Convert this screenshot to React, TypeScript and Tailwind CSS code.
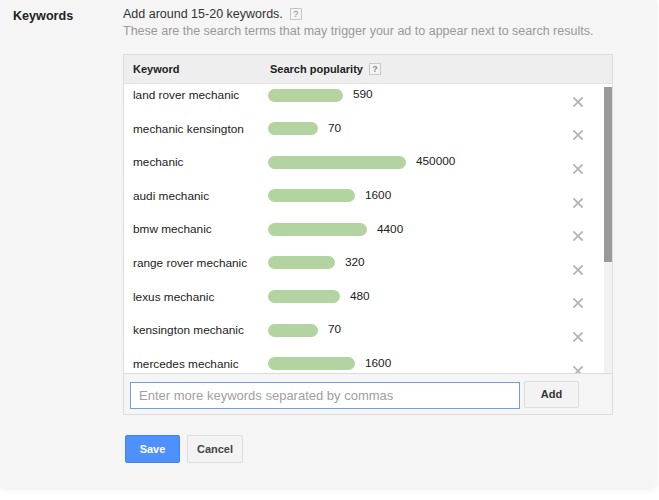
import React from "react";

const rows: [string, number, string][] = [
  ["land rover mechanic", 75, "590"],
  ["mechanic kensington", 50, "70"],
  ["mechanic", 138, "450000"],
  ["audi mechanic", 87, "1600"],
  ["bmw mechanic", 99, "4400"],
  ["range rover mechanic", 67, "320"],
  ["lexus mechanic", 72, "480"],
  ["kensington mechanic", 50, "70"],
  ["mercedes mechanic", 87, "1600"],
];

function Help() {
  return (
    <span className="inline-flex items-center justify-center w-[12px] h-[12px] border border-[#c8c8c8] bg-[#f4f4f4] text-[9px] text-[#888] leading-none">
      ?
    </span>
  );
}

function XIcon() {
  return (
    <svg width="10" height="10" viewBox="0 0 10 10">
      <path d="M1 1 L9 9 M9 1 L1 9" stroke="#b5b5b5" strokeWidth="1.8" strokeLinecap="square" />
    </svg>
  );
}

export default function App() {
  return (
    <div className="w-[659px] h-[500px] bg-white font-['Liberation_Sans',Arial,sans-serif] text-[#333]">
      <div className="w-[657px] h-[488px] bg-[#f5f5f5] rounded-br-[6px] shadow-[0_2px_6px_rgba(0,0,0,0.06)] flex">
        <div className="w-[123px] pl-[13px] pt-[7px] text-[12.6px] font-bold text-[#222]">Keywords</div>
        <div className="flex flex-col">
          <div className="pt-[7px] text-[12.5px] text-[#333] flex items-center gap-[7px] h-[21px]">
            <span>Add around 15-20 keywords.</span>
            <Help />
          </div>
          <div className="text-[12.5px] text-[#999] mt-[2px] leading-[16px]">
            These are the search terms that may trigger your ad to appear next to search results.
          </div>
          <div className="mt-[15px] w-[490px] border border-[#dcdcdc] flex flex-col">
            <div className="h-[29px] bg-[#eeeeee] border-b border-[#e2e2e2] flex items-center text-[11px] font-bold text-[#222]">
              <div className="pl-[9px] w-[146px]">Keyword</div>
              <div className="flex items-center gap-[6px]">
                <span>Search popularity</span>
                <Help />
              </div>
            </div>
            <div className="h-[289px] bg-white flex overflow-hidden">
              <div className="flex-1 flex flex-col">
                {rows.map(([k, w, n], i) => (
                  <div key={i} className="h-[33.6px] shrink-0 flex">
                    <div className="flex-1 flex items-start pt-[4px]">
                      <div className="w-[144px] pl-[9px] text-[11.8px] leading-[14px] text-[#222]">{k}</div>
                      <div className="flex items-center h-[14px]">
                        <div className="h-[13px] rounded-full bg-[#b3d4a0]" style={{ width: w }} />
                        <span className="ml-[10px] text-[11.8px] text-[#222]">{n}</span>
                      </div>
                    </div>
                    <div className="w-[52px] flex items-center justify-center pt-[2px]">
                      <XIcon />
                    </div>
                  </div>
                ))}
              </div>
              <div className="w-[8px] flex flex-col bg-[#f2f2f2]">
                <div className="h-[3px] bg-white" />
                <div className="h-[175px] bg-[#999999]" />
              </div>
            </div>
            <div className="h-[41px] bg-[#f5f5f5] border-t border-[#dcdcdc] flex items-center pl-[6px] gap-[4px]">
              <div className="w-[390px] h-[27px] bg-white border border-[#6d9ef2] flex items-center pl-[8px] text-[13px] text-[#a0a0a0] mt-[3px]">
                Enter more keywords separated by commas
              </div>
              <div className="w-[55px] h-[27px] border border-[#dcdcdc] bg-[#f3f3f3] rounded-[2px] flex items-center justify-center text-[11px] font-bold text-[#333]">
                Add
              </div>
            </div>
          </div>
          <div className="mt-[20px] flex gap-[7px] ml-[2px]">
            <div className="w-[55px] h-[28px] bg-[#4d90fe] border border-[#3f83f0] rounded-[2px] flex items-center justify-center text-[11px] font-bold text-white">
              Save
            </div>
            <div className="w-[56px] h-[28px] bg-[#f3f3f3] border border-[#dcdcdc] rounded-[2px] flex items-center justify-center text-[11px] font-bold text-[#444]">
              Cancel
            </div>
          </div>
        </div>
      </div>
    </div>
  );
}
